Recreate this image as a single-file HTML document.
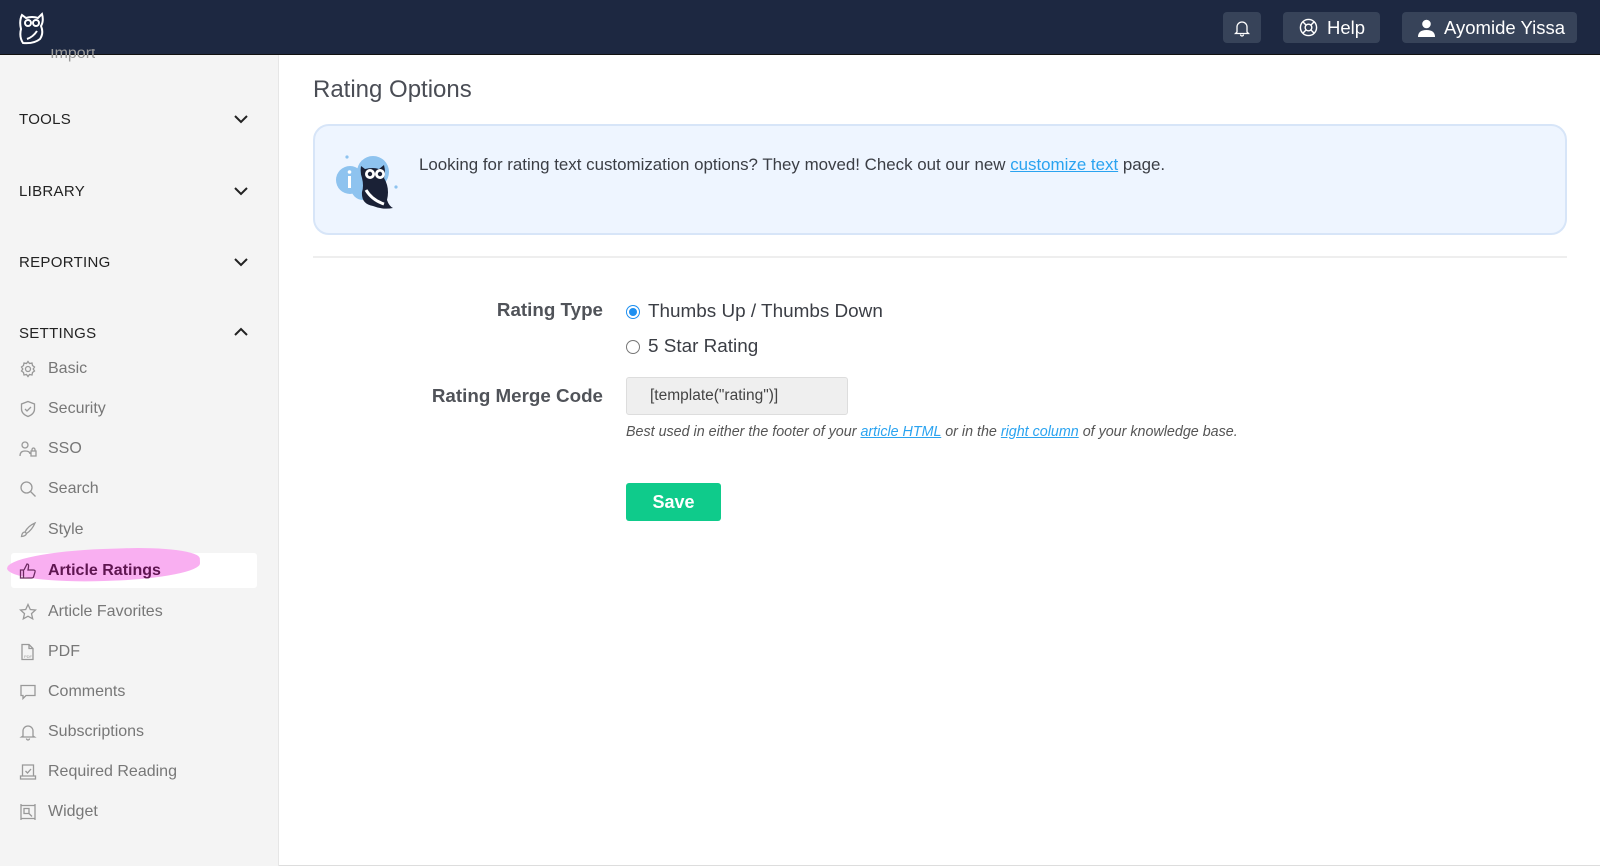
<!DOCTYPE html>
<html><head><meta charset="utf-8"><style>
*{box-sizing:border-box;margin:0;padding:0}
body{width:1600px;height:866px;overflow:hidden;font-family:"Liberation Sans",Arial,sans-serif;background:#fff;position:relative}
.hdr{position:absolute;left:0;top:0;width:1600px;height:55px;background:#1d2841;border-bottom:1px solid #111}
.hb{position:absolute;top:12px;height:31px;background:#374359;border-radius:4px;color:#fff;font-size:18.5px;display:flex;align-items:center;gap:9px;padding-left:16px}
.side{position:absolute;left:0;top:55px;width:279px;height:811px;background:#f4f4f4;border-right:1px solid #e6e6e6}
.sec{position:absolute;left:19px;font-size:15px;color:#222;letter-spacing:.3px}
.chev{position:absolute;left:234px;width:14px;height:9px}
.it{position:absolute;left:19px;font-size:16px;color:#777;display:flex;align-items:center;height:20px}
.it svg{width:18px;height:18px;margin-right:11px;stroke:#999;fill:none;stroke-width:1.3}
.main{position:absolute;left:313px}
</style></head><body>
<div class="hdr">
<svg style="position:absolute;left:17px;top:11px" width="30" height="34" viewBox="0 0 30 34" fill="none" stroke="#fff" stroke-width="2"><path d="M5 4 L9 7 Q15 5 21 7 L25 3 Q27 10 24 15 Q27 22 23 28 Q17 33 6 32 Q2 26 4 18 Q2 10 5 4Z"/><circle cx="11" cy="12" r="3"/><circle cx="19" cy="12" r="3"/><path d="M10 28 Q16 26 20 20"/></svg>
<div class="hb" style="left:1223px;width:38px;padding-left:11px"><svg width="16" height="18" viewBox="0 0 16 18" fill="none" stroke="#fff" stroke-width="1.3"><path d="M3 13V8a5 5 0 0110 0v5l1.5 1.5h-13z M6.5 15.5a1.5 1.5 0 003 0"/></svg></div>
<div class="hb" style="left:1283px;width:97px"><svg width="19" height="19" viewBox="0 0 20 20" fill="none" stroke="#fff" stroke-width="1.5"><circle cx="10" cy="10" r="8.5"/><circle cx="10" cy="10" r="3.5"/><path d="M4 4l3.5 3.5M16 4l-3.5 3.5M4 16l3.5-3.5M16 16l-3.5-3.5"/></svg>Help</div>
<div class="hb" style="left:1402px;width:175px"><svg width="17" height="18" viewBox="0 0 17 18" fill="#fff"><circle cx="8.5" cy="5" r="4.3"/><path d="M0 18q0-7 8.5-7t8.5 7z"/></svg>Ayomide Yissa</div>
</div>
<div class="side">
<div class="it" style="top:-6px;color:#999;height:14px;overflow:hidden;align-items:flex-end">&nbsp;&nbsp;&nbsp;&nbsp;&nbsp;&nbsp;&nbsp;Import</div>
<div class="sec" style="top:56px">TOOLS</div><svg class="chev" style="top:60px" viewBox="0 0 14 9" fill="none" stroke="#222" stroke-width="2"><path d="M1 1l6 6 6-6"/></svg>
<div class="sec" style="top:128px">LIBRARY</div><svg class="chev" style="top:132px" viewBox="0 0 14 9" fill="none" stroke="#222" stroke-width="2"><path d="M1 1l6 6 6-6"/></svg>
<div class="sec" style="top:199px">REPORTING</div><svg class="chev" style="top:203px" viewBox="0 0 14 9" fill="none" stroke="#222" stroke-width="2"><path d="M1 1l6 6 6-6"/></svg>
<div class="sec" style="top:270px">SETTINGS</div><svg class="chev" style="top:272px" viewBox="0 0 14 9" fill="none" stroke="#222" stroke-width="2"><path d="M1 8l6-6 6 6"/></svg>
<div class="it" style="top:304px"><svg viewBox="0 0 18 18"><circle cx="9" cy="9" r="2.5"/><path d="M9 1.5l1.5 2 2.5-.5.5 2.5 2 1.5-1.3 2 1.3 2-2 1.5-.5 2.5-2.5-.5L9 16.5l-1.5-2-2.5.5-.5-2.5-2-1.5 1.3-2-1.3-2 2-1.5.5-2.5 2.5.5z"/></svg>Basic</div>
<div class="it" style="top:344px"><svg viewBox="0 0 18 18"><path d="M9 1.5l6.5 2.5v5q0 5-6.5 7.5Q2.5 14 2.5 9V4z M6 9l2 2 4-4"/></svg>Security</div>
<div class="it" style="top:384px"><svg viewBox="0 0 18 18"><circle cx="6" cy="5" r="3"/><path d="M1 16q0-5 5-5t5 3M12 11h5v5h-5zM13 11V9.5a1.5 1.5 0 013 0V11"/></svg>SSO</div>
<div class="it" style="top:424px"><svg viewBox="0 0 18 18"><circle cx="7.5" cy="7.5" r="5.5"/><path d="M11.5 11.5l5 5"/></svg>Search</div>
<div class="it" style="top:465px"><svg viewBox="0 0 18 18"><path d="M16 2Q9 5 6 11l1.5 1.5Q13 9 16 2zM6 11q-3 0-3.5 4.5Q7 15 7.5 12.5"/></svg>Style</div>
<div style="position:absolute;left:11px;top:498px;width:246px;height:35px;background:#fff;border-radius:3px"></div>
<div style="position:absolute;left:7px;top:494px;width:193px;height:32px;background:#f9aff1;border-radius:50% 40% 45% 50%;transform:rotate(-2deg)"></div>
<div class="it" style="top:506px;color:#5e1550;font-weight:bold"><svg viewBox="0 0 18 18" style="stroke:#6d2a62"><path d="M1.5 8h3v8h-3zM5 8l3-6q2 0 1.5 3L9 8h5.5q2 0 1.5 2l-1.5 5q-.5 1-2 1H5"/></svg>Article Ratings</div>
<div class="it" style="top:547px"><svg viewBox="0 0 18 18"><path d="M9 1.5l2.3 5 5.2.5-4 3.6 1.2 5.2L9 13.2l-4.7 2.6 1.2-5.2-4-3.6 5.2-.5z"/></svg>Article Favorites</div>
<div class="it" style="top:587px"><svg viewBox="0 0 18 18"><path d="M3 1.5h7l4 4v11H3zM10 1.5v4h4"/><text x="5" y="15" font-size="4" fill="#999" stroke="none">PDF</text></svg>PDF</div>
<div class="it" style="top:627px"><svg viewBox="0 0 18 18"><path d="M2 2.5h14v10H7l-3 3v-3H2z"/></svg>Comments</div>
<div class="it" style="top:667px"><svg viewBox="0 0 18 18"><path d="M4 13V8a5 5 0 0110 0v5l1.5 1H2.5zM7.5 15.5a1.5 1.5 0 003 0"/></svg>Subscriptions</div>
<div class="it" style="top:707px"><svg viewBox="0 0 18 18"><path d="M3.5 2h11v11h-11zM1.5 13h15v3h-15zM6.5 8l2 2 3.5-4"/></svg>Required Reading</div>
<div class="it" style="top:747px"><svg viewBox="0 0 18 18"><path d="M2 2.5h14v13H2zM5 5.5h5v5H5zM10 10.5l3 3M2 1v3M16 1v3M2 14v3M16 14v3"/></svg>Widget</div>
</div>
<div class="main" style="top:76px;font-size:24px;color:#4a4d55">Rating Options</div>
<div class="main" style="top:124px;width:1254px;height:111px;background:#eef5ff;border:2px solid #d7e5f8;border-radius:16px"></div>
<svg style="position:absolute;left:333px;top:152px" width="66" height="60" viewBox="0 0 66 60"><circle cx="17" cy="28" r="14" fill="#8ec3ef"/><circle cx="40" cy="20" r="16" fill="#8ec3ef"/><circle cx="30" cy="36" r="12" fill="#8ec3ef"/><circle cx="14" cy="5" r="1.6" fill="#8ec3ef"/><circle cx="63" cy="35" r="1.6" fill="#8ec3ef"/><rect x="15" y="24" width="3" height="12" fill="#fff"/><circle cx="16.5" cy="20" r="1.8" fill="#fff"/><path d="M28 14l4 3q8-2 14 0l5-4q2 8 0 13 6 10 3 22 2 6 6 8-10 2-20-2-12-2-11-14 2-6 0-14-2-5-1-12z" fill="#1a2136"/><circle cx="37" cy="22" r="5" fill="#fff"/><circle cx="47" cy="22" r="5" fill="#fff"/><circle cx="37" cy="22" r="2.2" fill="#1a2136"/><circle cx="47" cy="22" r="2.2" fill="#1a2136"/><path d="M33 38q6 10 18 14" stroke="#fff" stroke-width="3" fill="none"/></svg>
<div style="position:absolute;left:419px;top:155px;font-size:16.9px;color:#3b3e45">Looking for rating text customization options? They moved! Check out our new <span style="color:#2aa3f0;text-decoration:underline">customize text</span> page.</div>
<div class="main" style="top:256px;width:1254px;height:2px;background:#eeeeee"></div>
<div style="position:absolute;left:400px;width:203px;text-align:right;top:299px;font-size:18.8px;font-weight:bold;color:#505359">Rating Type</div>
<div style="position:absolute;left:400px;width:203px;text-align:right;top:385px;font-size:18.8px;font-weight:bold;color:#505359">Rating Merge Code</div>
<div style="position:absolute;left:626px;top:305px;width:14px;height:14px;border-radius:50%;border:1.5px solid #1e8ff0;background:#fff"><div style="margin:2px;width:8px;height:8px;border-radius:50%;background:#1e8ff0"></div></div>
<div style="position:absolute;left:648px;top:301px;font-size:18.9px;color:#3b3e45">Thumbs Up / Thumbs Down</div>
<div style="position:absolute;left:626px;top:340px;width:14px;height:14px;border-radius:50%;border:1px solid #777;background:#fff"></div>
<div style="position:absolute;left:648px;top:336px;font-size:18.9px;color:#3b3e45">5 Star Rating</div>
<div style="position:absolute;left:626px;top:377px;width:222px;height:38px;background:#efefef;border:1px solid #ddd;border-radius:3px;font-size:15.5px;color:#444;padding:9px 0 0 23px">[template("rating")]</div>
<div style="position:absolute;left:626px;top:424px;font-size:14.3px;font-style:italic;color:#555">Best used in either the footer of your <span style="color:#2aa3f0;text-decoration:underline">article HTML</span> or in the <span style="color:#2aa3f0;text-decoration:underline">right column</span> of your knowledge base.</div>
<div style="position:absolute;left:626px;top:483px;width:95px;height:38px;background:#0fcb8b;border-radius:3px;color:#fff;font-size:18px;font-weight:bold;text-align:center;line-height:38px">Save</div>
<div style="position:absolute;left:279px;top:865px;width:1321px;height:1px;background:#ddd"></div>
</body></html>
